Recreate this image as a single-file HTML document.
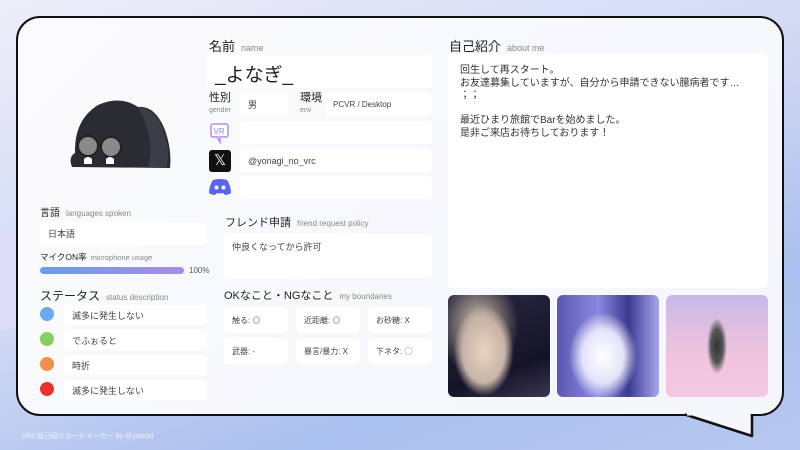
<!DOCTYPE html><html><head><meta charset="utf-8"><style>
*{margin:0;padding:0;box-sizing:border-box}
body{width:800px;height:450px;overflow:hidden;position:relative;font-family:"Liberation Sans","Noto Sans CJK JP",sans-serif;color:#333;
background:radial-gradient(circle at 0 280px,#dcdcf6 0 50px,transparent 51px),linear-gradient(160deg,#eceef8 0%,#d0d8f4 45%,#aac0ee 75%,#b8c8f0 100%)}
.a{position:absolute}
.card{left:16px;top:16px;width:768px;height:400px;border:2.5px solid #111;border-radius:24px;background:linear-gradient(135deg,#fbfbfd,#f4f6fb)}
.box{position:absolute;background:#fff;border-radius:4px;font-size:9px;color:#444;padding-left:8px;display:flex;align-items:center}
.h{position:absolute;font-size:12px;color:#222;white-space:nowrap}
.h small{font-size:8px;color:#888;margin-left:6px}
.dot{position:absolute;width:14px;height:14px;border-radius:50%}
.ph{position:absolute;top:295px;width:102px;height:102px;border-radius:6px}
</style></head><body>
<div class="a card"></div>
<svg class="a" style="left:0;top:0" width="800" height="450"><path d="M685 414.5 L752 436 L752 414.5" fill="#f6f7fb" stroke="#111" stroke-width="2.5" stroke-linejoin="round"/><rect x="687" y="410" width="63.5" height="5.5" fill="#f6f7fb"/></svg>
<!-- avatar -->
<svg class="a" style="left:60px;top:95px" width="115" height="80"><path d="M12 72 Q8 62 15 58 Q14 25 38 10 Q60 0 78 12 Q95 10 105 35 Q112 55 110 73 Z" fill="#2b2b33"/><path d="M78 12 Q100 15 106 45 Q110 62 106 72 L88 72 Q96 45 78 12Z" fill="#3d3d48"/><circle cx="28" cy="51" r="10" fill="#8a8a8a" stroke="#222" stroke-width="2"/><circle cx="51" cy="52" r="10" fill="#8a8a8a" stroke="#222" stroke-width="2"/><path d="M24 64 q4 -4 8 0 v5 h-8z M46 64 q4 -4 8 0 v5 h-8z" fill="#fff"/></svg>
<div class="h" style="left:40px;top:204px;font-size:10px">言語<small>languages spoken</small></div>
<div class="box" style="left:40px;top:222px;width:167px;height:23px">日本語</div>
<div class="h" style="left:40px;top:251px;font-size:8.5px">マイクON率<small style="font-size:7.5px;margin-left:4px">microphone usage</small></div>
<div class="a" style="left:40px;top:267px;width:144px;height:7px;border-radius:4px;background:linear-gradient(90deg,#6a9cf0,#a98af0)"></div>
<div class="h" style="left:189px;top:266px;font-size:8px;color:#555">100%</div>
<div class="h" style="left:40px;top:287px;font-size:12px">ステータス<small>status description</small></div>
<div class="dot" style="left:40px;top:307px;background:#6aaaf0"></div>
<div class="dot" style="left:40px;top:332px;background:#85d060"></div>
<div class="dot" style="left:40px;top:357px;background:#f0904a"></div>
<div class="dot" style="left:40px;top:382px;background:#e83228"></div>
<div class="box" style="left:64px;top:305px;width:143px;height:20px;padding-left:8px">滅多に発生しない</div>
<div class="box" style="left:64px;top:330px;width:143px;height:20px">でふぉると</div>
<div class="box" style="left:64px;top:355px;width:143px;height:20px">時折</div>
<div class="box" style="left:64px;top:380px;width:143px;height:20px">滅多に発生しない</div>
<!-- middle -->
<div class="h" style="left:209px;top:36px;font-size:13px">名前<small style="font-size:9px">name</small></div>
<div class="box" style="left:207px;top:55px;width:225px;height:33px;font-size:19px;color:#222;padding-top:4px">_よなぎ_</div>
<div class="h" style="left:209px;top:93px;font-size:11px;line-height:11px">性別<br><span style="font-size:7px;color:#888">gender</span></div>
<div class="box" style="left:240px;top:93px;width:48px;height:22px">男</div>
<div class="h" style="left:300px;top:93px;font-size:11px;line-height:11px">環境<br><span style="font-size:7px;color:#888">env</span></div>
<div class="box" style="left:325px;top:93px;width:107px;height:22px;font-size:8px">PCVR / Desktop</div>
<svg class="a" style="left:209px;top:122px" width="22" height="22"><rect x="2" y="2" width="17" height="13" rx="2" fill="#fff" stroke="#b58af0" stroke-width="1.5"/><path d="M8 15 L11 20 L11 15" fill="#fff" stroke="#b58af0" stroke-width="1.5"/><text x="4.5" y="12" font-size="8" fill="#8a8af0" font-family="Liberation Sans">VR</text></svg>
<div class="box" style="left:240px;top:121px;width:192px;height:23px"></div>
<div class="a" style="left:209px;top:150px;width:22px;height:22px;background:#111;border-radius:3px;color:#fff;font-size:15px;text-align:center;line-height:22px">𝕏</div>
<div class="box" style="left:240px;top:149px;width:192px;height:23px">@yonagi_no_vrc</div>
<svg class="a" style="left:208px;top:178px" width="24" height="18"><path d="M5 2 Q12 0 19 2 Q23 8 23 15 Q20 17 17 17 L15 15 Q12 16 9 15 L7 17 Q4 17 1 15 Q1 8 5 2Z" fill="#5865f2"/><circle cx="8.5" cy="9.5" r="2" fill="#fff"/><circle cx="15.5" cy="9.5" r="2" fill="#fff"/></svg>
<div class="box" style="left:240px;top:176px;width:192px;height:23px"></div>
<div class="h" style="left:225px;top:214px;font-size:11px">フレンド申請<small>friend request policy</small></div>
<div class="box" style="left:224px;top:234px;width:208px;height:44px;align-items:flex-start;padding:6px 8px">仲良くなってから許可</div>
<div class="h" style="left:224px;top:287px;font-size:11px">OKなこと・NGなこと<small>my boundaries</small></div>
<div class="box" style="left:224px;top:307px;width:64px;height:26px;font-size:8px">触る: ◎</div>
<div class="box" style="left:296px;top:307px;width:64px;height:26px;font-size:8px">近距離: ◎</div>
<div class="box" style="left:368px;top:307px;width:64px;height:26px;font-size:8px">お砂糖: X</div>
<div class="box" style="left:224px;top:338px;width:64px;height:26px;font-size:8px">武器: -</div>
<div class="box" style="left:296px;top:338px;width:64px;height:26px;font-size:8px">暴言/暴力: X</div>
<div class="box" style="left:368px;top:338px;width:64px;height:26px;font-size:8px">下ネタ: ◯</div>
<!-- right -->
<div class="h" style="left:449px;top:36px;font-size:13px">自己紹介<small style="font-size:9px">about me</small></div>
<div class="box" style="left:448px;top:54px;width:320px;height:234px;align-items:flex-start;padding:11px 12px;font-size:10px;line-height:12.6px;color:#333;display:block">回生して再スタート。<br>お友達募集していますが、自分から申請できない臆病者です…<br>；；<br><br>最近ひまり旅館でBarを始めました。<br>是非ご来店お待ちしております！</div>
<div class="ph" style="left:448px;background:radial-gradient(ellipse 30px 45px at 35% 55%,#e8d4c0 0,#c8b4a8 70%,transparent 100%),radial-gradient(ellipse 40px 50px at 30% 30%,#d8c8b0 0,transparent 100%),linear-gradient(160deg,#2a2840,#141428 70%,#3a3550)"></div>
<div class="ph" style="left:557px;background:radial-gradient(ellipse 34px 44px at 45% 60%,#fff 0,#e4e4fa 60%,transparent 100%),linear-gradient(90deg,#5a58b0,#8a88e0 40%,#3c3a90 70%,#a8a6f0)"></div>
<div class="ph" style="left:666px;background:radial-gradient(ellipse 10px 28px at 50% 50%,#333 0,#555 60%,transparent 100%),linear-gradient(180deg,#c9b8e8,#f0c4dc 60%,#f4c8e2)"></div>
<div class="h" style="left:22px;top:431px;font-size:7px;color:rgba(255,255,255,.8)">VRC自己紹介カードメーカー by @yota3d</div>
</body></html>
